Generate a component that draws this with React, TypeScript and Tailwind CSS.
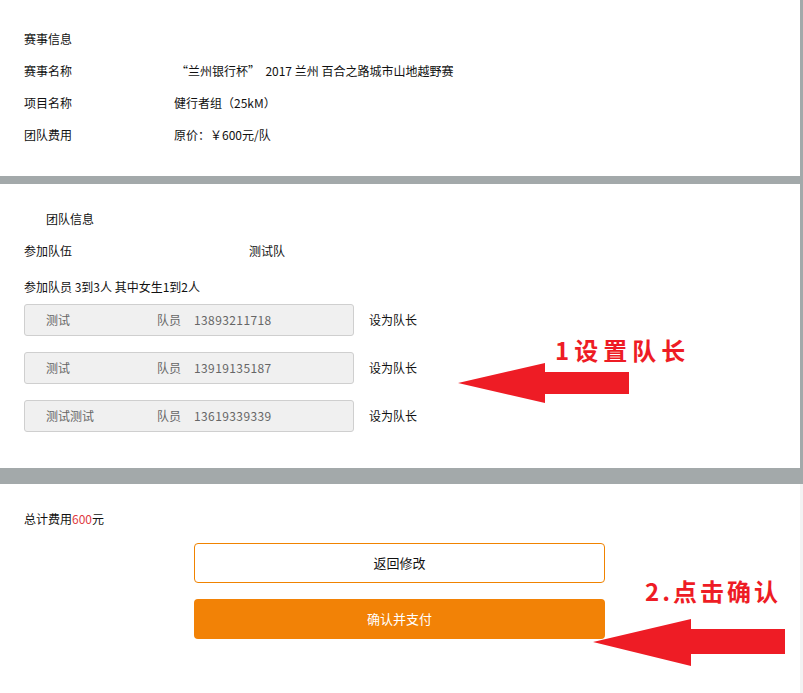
import React from 'react';

const members = [
  { name: '测试', role: '队员', phone: '13893211718' },
  { name: '测试', role: '队员', phone: '13919135187' },
  { name: '测试测试', role: '队员', phone: '13619339339' },
];

const font = { fontFamily: '"Noto Sans CJK SC", "Liberation Sans", sans-serif' };

function InfoRow({ label, value, valueCls = '' }: { label: string; value: React.ReactNode; valueCls?: string }) {
  return (
    <div className="flex h-8 items-center">
      <span className="w-[150px] shrink-0">{label}</span>
      <span className={valueCls}>{value}</span>
    </div>
  );
}

export default function App() {
  return (
    <div className="relative w-[803px] h-[693px] overflow-hidden bg-white text-[12px] text-[#111]" style={font}>
      {/* 赛事信息 */}
      <section className="h-[176px] border-r-[3px] border-[#a3a9aa] pl-6 pt-[23px]">
        <div className="flex h-8 items-center">赛事信息</div>
        <InfoRow label="赛事名称" value="“兰州银行杯”  2017 兰州 百合之路城市山地越野赛" valueCls="ml-[2px] whitespace-pre" />
        <InfoRow label="项目名称" value="健行者组（25kM）" />
        <InfoRow label="团队费用" value="原价：￥600元/队" />
      </section>

      <div className="h-2 bg-[#a3a9aa]" />

      {/* 团队信息 */}
      <section className="h-[284px] border-r-[3px] border-[#a3a9aa] pl-6 pt-[19px]">
        <div className="flex h-8 items-center pl-[22px]">团队信息</div>
        <div className="flex h-8 items-center">
          <span className="w-[225px] shrink-0">参加队伍</span>
          <span>测试队</span>
        </div>
        <div className="mt-1 flex h-8 items-center">参加队员 3到3人 其中女生1到2人</div>
        <div className="mt-px flex flex-col gap-4">
          {members.map((m, i) => (
            <div key={i} className="flex items-center">
              <div className="flex h-8 w-[330px] items-center rounded-[3px] border border-[#cfcfcf] bg-[#f0f0f0] pl-[21px] text-[#666]">
                <span className="w-[111px] shrink-0">{m.name}</span>
                <span className="w-[37px] shrink-0">{m.role}</span>
                <span className="tracking-[0.4px]">{m.phone}</span>
              </div>
              <span className="ml-[15px]">设为队长</span>
            </div>
          ))}
        </div>
      </section>

      <div className="h-4 bg-[#a3a9aa]" />

      {/* 总计 */}
      <section className="h-[209px] border-r-[3px] border-[#f3f3f3] pl-6 pt-[19px]">
        <div className="flex h-8 items-center">
          总计费用<span className="text-[#e0393e]">600</span>元
        </div>
        <div className="ml-[170px] mt-2 flex w-[411px] flex-col gap-4 text-[13px]">
          <button className="flex h-10 items-center justify-center rounded-[4px] border border-[#f08300] bg-white text-[#111]">
            返回修改
          </button>
          <button className="flex h-10 items-center justify-center rounded-[4px] bg-[#f28206] text-white">
            确认并支付
          </button>
        </div>
      </section>

      {/* annotations */}
      <svg className="pointer-events-none absolute left-0 top-0" width="803" height="693" viewBox="0 0 803 693">
        <polygon fill="#ee1c25" points="458,383 545,363 545,372 629,372 629,394 545,394 545,403" />
        <polygon fill="#ee1c25" points="593,642 691,619 691,629 785,629 785,654 691,654 691,666" />
      </svg>
      <div className="absolute left-[555px] top-[338px] text-[24px] font-bold leading-none tracking-[5px] text-[#ee1c25]">
        1设置队长
      </div>
      <div className="absolute left-[645px] top-[579px] text-[24px] font-bold leading-none tracking-[3px] text-[#ee1c25]">
        2.点击确认
      </div>
    </div>
  );
}
